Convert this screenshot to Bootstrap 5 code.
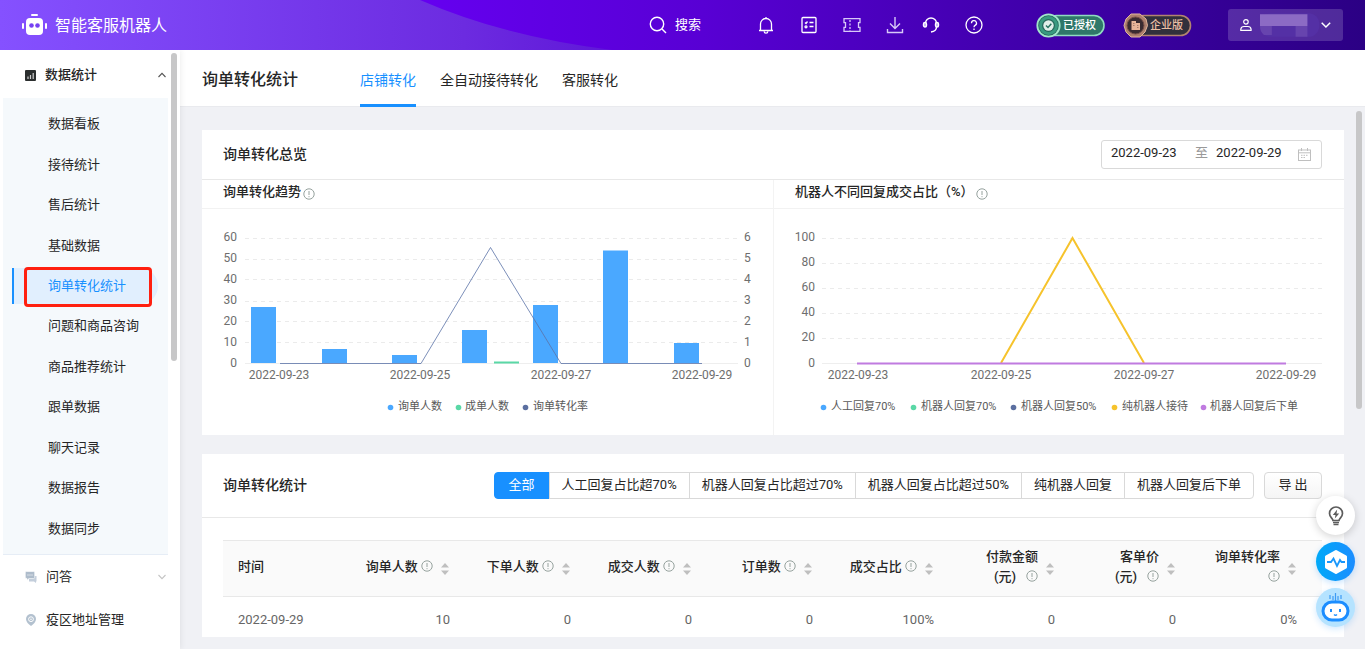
<!DOCTYPE html>
<html lang="zh-CN">
<head>
<meta charset="utf-8">
<meta name="viewport" content="width=device-width, initial-scale=1">
<title>智能客服机器人</title>
<link href="https://cdn.jsdelivr.net/npm/bootstrap@5.3.0/dist/css/bootstrap.min.css" rel="stylesheet">
<style>
:root{--ink:#262626;--brand:#1890ff;--rule:#e8e8e8}
body{font:13px/20px Roboto,"Noto Sans CJK SC",sans-serif;color:var(--ink);background:#f0f1f5}
button,input{font:inherit;color:inherit}
a{color:inherit;text-decoration:none}
.plain{border:0;background:none;padding:0}
.topbar{height:50px;background:linear-gradient(90deg,#8551ff,#6c2be0 34%,#5f17d8 45%);color:#fff;padding:0 22px 0 21px}
.topbar-curve{position:absolute;inset:0;width:100%;height:100%}
.brand-name{font-size:16px;padding-top:2px}
.search-btn{margin-right:56px}
.tool-row{gap:25px}
.tool-pair{gap:18px}
.pills{gap:18px;margin:0 36px 0 53px}
.pill{position:relative;width:69px;height:25px}
.pill svg{position:absolute;inset:0}
.pill span{position:absolute;left:27px;top:3px;font-size:11px;line-height:19px;font-weight:500}
.pill-bronze{color:#ecbfa4}
.account{width:115px;height:32px;border-radius:3px;background:rgba(255,255,255,.17);padding:0 12px}
.side{width:180px;background:#fff;box-shadow:1px 0 6px rgba(0,0,0,.07);z-index:1;padding-top:2px}
.side-head{height:46px;padding:0 14px 0 25px;gap:9px}
.side-group{font-weight:500}
.submenu{margin:0 12px 0 3px;padding:6px 0 5px;background:#f5f9fc;border-bottom:1px solid #e6edf6}
.submenu ul{height:445px}
.submenu a{height:36px;margin:0 10px 0 9px;padding-left:36px;display:flex;align-items:center}
.submenu a.current{background:#e1effe;color:var(--brand);border-left:2px solid var(--brand);padding-left:34px;border-radius:0 18px 18px 0;position:relative}
.outline-box{position:absolute;left:10px;right:6px;top:-1px;bottom:-3px;border:3px solid #ff2010;border-radius:4px}
.side-foot{height:43px}
.thumb{position:absolute;width:6px;border-radius:3px;background:#c7c7c8}
.side .thumb{top:3px;right:3px;height:308px}
.page-scroll>.thumb{top:4px;right:3px;height:298px}
.page-head{height:57px;background:#fff;border-bottom:1px solid #e9eaee;padding-left:22px;gap:62px}
.page-head h1{font-size:16px;line-height:24px;font-weight:500;margin:4px 0 0}
.page-tabs{gap:24px;font-size:14px;padding-top:2px}
.page-tabs a{height:56px;padding-top:4px;display:flex;align-items:center;border-bottom:3px solid transparent}
.page-tabs a.active{color:var(--brand);border-color:var(--brand)}
.page-body{padding:23px 21px 12px 22px;gap:19px}
.panel{background:#fff}
.panel-head{padding:0 22px 0 21px;border-bottom:1px solid var(--rule)}
.panel-head h2{font-size:14px;line-height:22px;font-weight:500;margin:0 0 2px}
.short-head{height:50px}.tall-head{height:64px}
.range{width:221px;height:29px;border:1px solid #d9d9d9;border-radius:3px;padding:0 10px 3px 9px;margin-top:-1px}
.range input{border:0;padding:0;width:76px;background:none;outline:0}
.range label{color:#999}
.chart-half+.chart-half{border-left:1px solid #f3f3f3}
.chart-head{height:29px;padding:0 21px 4px;border-bottom:1px solid #f2f2f2;gap:2px}
.chart-head h3{font-size:13px;line-height:20px;font-weight:500;margin:0}
.chart{display:block;width:100%;height:auto}
.chart text{font-size:12px;fill:#6e6e6e}
.chart .legend-text text{font-size:11px;fill:#595959}
.filters{gap:10px}
.filters .btn{font-size:13px;line-height:19px;padding:2px 12px 4px;border:1px solid #d9d9d9;border-radius:4px;color:var(--ink);background:#fff}
.filters .btn-group .btn:first-child{background:var(--brand);border-color:var(--brand);color:#fff;padding-left:14px;padding-right:14px}
.filters .export{background:linear-gradient(#fff,#f5f5f5);width:58px}
.data-wrap{padding:22px 22px 0 21px}
.data{table-layout:fixed;width:100%}
.data th{height:56px;background:#fafafa;border-top:1px solid var(--rule);border-bottom:1px solid var(--rule);font-weight:500;padding:0 16px 4px 15px;vertical-align:middle}
.data td{height:40px;padding:6px 15px 0;text-align:right;color:#666}
.data .day{text-align:left}
.data th:last-child,.data td:last-child{width:131px;padding-right:25px}
.data th:last-child{padding-right:26px}
.sorting{gap:8px;margin-left:-12px}
.sort{width:8px;height:12px;margin-top:4px}
.info{width:12px;height:12px;vertical-align:-1px;fill:none;stroke:#96a29e}
.floaters{position:fixed;right:10px;bottom:22px;gap:7px}
.floaters button{width:39px;height:39px;border-radius:50%}
.tip-btn{background:#fff;box-shadow:0 2px 8px rgba(0,0,0,.18)}
.pulse-btn{background:linear-gradient(90deg,#00a9f8,#1b8dff);box-shadow:0 2px 6px rgba(24,144,255,.25)}
.bot-btn{background:#b5e3ff;box-shadow:0 2px 6px rgba(24,144,255,.2)}
</style>
</head>
<body class="vh-100 d-flex flex-column overflow-hidden">
<svg width="0" height="0" class="position-absolute" aria-hidden="true">
  <symbol id="info" viewBox="0 0 12 12"><circle cx="6" cy="6" r="5.2"/><path d="M6 3v4M6 8.2v1"/></symbol>
  <symbol id="sort" viewBox="0 0 8 12"><path fill="#bfbfbf" d="M4 0l4 4.500H0zM4 12l4-4.500H0z"/></symbol>
</svg>

<header class="topbar position-relative d-flex align-items-center flex-shrink-0">
  <svg class="topbar-curve" viewBox="0 0 1365 50" preserveAspectRatio="none" aria-hidden="true">
    <defs><linearGradient id="deep"><stop offset="0" stop-color="#6500f0"/><stop offset=".3" stop-color="#5800d4"/><stop offset=".6" stop-color="#4300b0"/><stop offset="1" stop-color="#2b0084"/></linearGradient></defs>
    <path fill="url(#deep)" d="M420 0Q505 37 612 50H1365V0Z"/>
  </svg>
  <a href="#" class="position-relative d-flex align-items-center gap-2">
    <svg width="26" height="22" viewBox="0 0 26 22" fill="#fff"><rect x="10" y="0" width="7" height="2" rx="1"/><rect x="5" y="4" width="17" height="17" rx="4"/><rect x="1" y="9" width="2" height="6" rx="1"/><rect x="24" y="9" width="2" height="6" rx="1"/><circle cx="10.500" cy="11.500" r="2.300" fill="#7641f2"/><circle cx="16.500" cy="11.500" r="2.300" fill="#7641f2"/></svg>
    <span class="brand-name">智能客服机器人</span>
  </a>
  <div class="position-relative d-flex align-items-center ms-auto">
    <button class="plain search-btn d-flex align-items-center gap-2">
      <svg width="18" height="18" viewBox="0 0 18 18" fill="none" stroke="#fff" stroke-width="1.400"><circle cx="8" cy="8" r="6.700"/><path d="M13 13l4 4"/></svg>搜索</button>
    <div class="tool-row d-flex">
      <button class="plain d-flex" aria-label="通知"><svg width="18" height="18" viewBox="0 0 18 18" fill="none" stroke="#fff" stroke-width="1.300"><path d="M2 14.500h14M3.500 14.500V8a5.500 5.500 0 0 1 11 0v6.500M9 1v1.500M7.200 15.500a1.800 1.600 0 0 0 3.600 0"/></svg></button>
      <button class="plain d-flex" aria-label="任务"><svg width="18" height="18" viewBox="0 0 18 18" fill="none" stroke="#fff" stroke-width="1.300"><rect x="2" y="1.500" width="14" height="15" rx="1"/><path d="M5 6.500l1 1 1.500-2M9.500 6.500h4M9.500 10.500h4"/><circle cx="6" cy="10.800" r="1"/></svg></button>
      <button class="plain d-flex" aria-label="卡券"><svg width="18" height="18" viewBox="0 0 18 18" fill="none" stroke="#d8c8f8" stroke-width="1.300"><path d="M1 2.700h16v4h-1.500v4.600H17v4H1v-4h1.500V6.700H1z"/><path d="M7 4v11" stroke-dasharray="2 1.500"/></svg></button>
      <div class="tool-pair d-flex">
        <button class="plain d-flex" aria-label="下载"><svg width="18" height="18" viewBox="0 0 18 18" fill="none" stroke="#d8c8f8" stroke-width="1.400"><path d="M9 1v11M4 7.500l5 5 5-5M1.500 13v3.500h15V13"/></svg></button>
        <button class="plain d-flex" aria-label="客服"><svg width="18" height="18" viewBox="0 0 18 18" fill="none" stroke="#fff" stroke-width="1.400"><path d="M3.500 7.500a5.500 5.500 0 0 1 11 0M14.500 11c0 3-2 4.500-5.500 5"/><rect x="1.500" y="6.500" width="3" height="4.500" rx="1.500" fill="#bda4f4"/><rect x="13.500" y="6.500" width="3" height="4.500" rx="1.500" fill="#bda4f4"/></svg></button>
      </div>
      <button class="plain d-flex" aria-label="帮助"><svg width="18" height="18" viewBox="0 0 18 18" fill="none" stroke="#fff" stroke-width="1.300"><circle cx="9" cy="9" r="8"/><path d="M6.500 7.200a2.500 2.500 0 1 1 3.600 2.200Q9 10 9 11.200M9 12.500v1.400"/></svg></button>
    </div>
    <div class="pills d-flex">
      <div class="pill">
        <svg width="69" height="25" viewBox="0 0 69 25"><rect x="10.500" y="2.500" width="57.500" height="20" rx="10" fill="#2f7769" stroke="#8fdcc0" stroke-width="1.600"/><circle cx="12.500" cy="12.500" r="11.200" fill="#27685b" stroke="#a1e6cb" stroke-width="1.800"/><circle cx="12.500" cy="12.500" r="8" fill="none" stroke="#399a80" stroke-width="3"/><circle cx="12.500" cy="12.500" r="5.200" fill="#e0efe9"/><path d="M10 12.500l2 2 3.300-3.800" fill="none" stroke="#287361" stroke-width="1.500"/></svg><span>已授权</span>
      </div>
      <div class="pill pill-bronze">
        <svg width="69" height="25" viewBox="0 0 69 25"><rect x="10.500" y="2.500" width="57" height="20" rx="10" fill="#31303c" stroke="#b28470" stroke-width="1.600"/><path d="M8 1h9l6 5 1.500 6.500L22 19l-5 5H8l-5-5-2-6.500L3 6z" fill="#ad806e" stroke="#e2b59d"/><circle cx="12.500" cy="12.500" r="8.500" fill="#3a2b31" stroke="#754e48"/><path d="M8.500 8h4.500v2h4v7H8.500z" fill="#e7b49a"/><path d="M10 10.500h1.500M10 12.500h1.500M14 12.500h1.500M14 14.500h1.500" stroke="#a87c6c"/></svg><span>企业版</span>
      </div>
    </div>
    <button class="plain account d-flex align-items-center" aria-label="账户">
      <svg width="12" height="14" viewBox="0 0 12 14" fill="none" stroke="#fff" stroke-width="1.200"><circle cx="6" cy="3.800" r="2.300"/><path d="M.8 12.500v-1.300q.4-2.700 3.200-2.700h4q2.800 0 3.200 2.700v1.300z"/></svg>
      <svg width="62" height="28" viewBox="0 0 62 28" class="ms-2" aria-hidden="true"><rect y="2" width="60" height="24" rx="11" fill="#5430a5"/><path fill="#8c6bc4" d="M0 3h48v12H0z"/><path fill="#6744ae" d="M0 15h12v9H4q-4-3-4-9M36 15h12v11H36z"/></svg>
      <svg width="10" height="6" viewBox="0 0 10 6" fill="none" stroke="#fff" stroke-width="1.500"><path d="M.7.7L5 5 9.300.7"/></svg>
    </button>
  </div>
</header>

<div class="d-flex flex-fill overflow-hidden">
  <nav class="side position-relative flex-shrink-0" aria-label="主导航">
    <a href="#" class="side-head side-group d-flex align-items-center">
      <svg width="11" height="11" viewBox="0 0 11 11"><rect width="11" height="11" rx="1" fill="#2b2e2e"/><path d="M3 6.500V9M5.500 5V9M8.200 3V9" stroke="#cfcfcf" stroke-width="1.200"/></svg>
      数据统计
      <svg class="ms-auto" width="8" height="6" viewBox="0 0 8 6" fill="none" stroke="#555" stroke-width="1.100"><path d="M.5 5L4 1.300 7.500 5"/></svg>
    </a>
    <div class="submenu">
      <ul class="list-unstyled m-0 d-flex flex-column justify-content-around">
        <li><a href="#">数据看板</a></li>
        <li><a href="#">接待统计</a></li>
        <li><a href="#">售后统计</a></li>
        <li><a href="#">基础数据</a></li>
        <li><a href="#" class="current" aria-current="page">询单转化统计<i class="outline-box"></i></a></li>
        <li><a href="#">问题和商品咨询</a></li>
        <li><a href="#">商品推荐统计</a></li>
        <li><a href="#">跟单数据</a></li>
        <li><a href="#">聊天记录</a></li>
        <li><a href="#">数据报告</a></li>
        <li><a href="#">数据同步</a></li>
      </ul>
    </div>
    <a href="#" class="side-head side-foot d-flex align-items-center">
      <svg width="12" height="12" viewBox="0 0 12 12"><path fill="#c3cedb" d="M4 5h7.500v5.500H11V12l-2-1.500H4z"/><path fill="#aebccb" stroke="#fff" stroke-width=".6" d="M1.500.5h7q1.200 0 1.200 1.200v4.600q0 1.200-1.200 1.200H4l-2 1.700V7.500Q.3 7.500.3 6.300V1.700Q.3.500 1.500.5"/><path d="M2.500 4h5" stroke="#fff" stroke-dasharray="1 1"/></svg>
      问答
      <svg class="ms-auto" width="8" height="6" viewBox="0 0 8 6" fill="none" stroke="#c4c4c4" stroke-width="1.100"><path d="M.5 1L4 4.700 7.500 1"/></svg>
    </a>
    <a href="#" class="side-head side-foot d-flex align-items-center">
      <svg width="12" height="12" viewBox="0 0 12 12"><path fill="#b3c1cf" d="M6 0a5 5 0 0 1 5 5c0 3-2.500 5-5 7C3.500 10 1 8 1 5a5 5 0 0 1 5-5"/><circle cx="6" cy="5.200" r="2.400" fill="none" stroke="#fff"/><circle cx="6" cy="5.200" r=".8" fill="#fff"/></svg>
      疫区地址管理
    </a>
    <i class="thumb"></i>
  </nav>

  <main class="flex-fill d-flex flex-column overflow-hidden">
    <div class="page-head d-flex align-items-center flex-shrink-0">
      <h1>询单转化统计</h1>
      <nav class="page-tabs d-flex" aria-label="转化类型">
        <a href="#" class="active">店铺转化</a><a href="#">全自动接待转化</a><a href="#">客服转化</a>
      </nav>
    </div>
    <div class="page-scroll position-relative flex-fill overflow-hidden">
      <div class="page-body d-flex flex-column">
        <section class="panel">
          <div class="panel-head short-head d-flex align-items-center justify-content-between">
            <h2>询单转化总览</h2>
            <div class="range d-flex align-items-center">
              <input id="from" type="text" value="2022-09-23" aria-label="开始日期">
              <label for="to" class="mx-2">至</label>
              <input id="to" type="text" value="2022-09-29">
              <svg class="ms-auto mt-1" width="13" height="13" viewBox="0 0 13 13" fill="none" stroke="#bfbfbf"><rect x=".5" y="2" width="12" height="10.500"/><path d="M.5 4.800h12M3.500 0v3M9.500 0v3"/><path d="M3 7.300h7M3 9.500h4" stroke-dasharray="1.500 1"/></svg>
            </div>
          </div>
          <div class="row g-0">
            <div class="col-6 chart-half">
              <div class="chart-head d-flex align-items-center"><h3>询单转化趋势</h3><svg class="info mt-1"><use href="#info"/></svg></div>
              <svg class="chart" viewBox="0 0 571 226" role="img" aria-label="询单转化趋势">
                <g stroke="#ebebeb" stroke-dasharray="4 4"><path d="M43 29.500H536M43 50.500H536M43 70.500H536M43 92.500H536M43 112.500H536M43 133.500H536"/></g><path d="M43 154.500H536" stroke="#eee"/>
                <g text-anchor="end"><text x="35" y="32">60</text><text x="35" y="53">50</text><text x="35" y="74">40</text><text x="35" y="95">30</text><text x="35" y="116">20</text><text x="35" y="137">10</text><text x="35" y="158">0</text></g>
                <g><text x="542" y="32">6</text><text x="542" y="53">5</text><text x="542" y="74">4</text><text x="542" y="95">3</text><text x="542" y="116">2</text><text x="542" y="137">1</text><text x="542" y="158">0</text></g>
                <g fill="#4aa8ff"><path d="M49 98h25v56H49zM120 140h25v14h-25zM190 146h25v8h-25zM260 121h25v33h-25zM331 96h25v58h-25zM401 41.500h25V154h-25zM472 134h25v20h-25z"/></g><path fill="#5ad8a6" d="M292 152.500h25v2h-25z"/>
                <path d="M78 154.500H219L288.500 38.500L359 154.500H500" fill="none" stroke="#5b73a8" stroke-opacity=".8"/>
                <g text-anchor="middle"><text x="77" y="170">2022-09-23</text><text x="218" y="170">2022-09-25</text><text x="359" y="170">2022-09-27</text><text x="500" y="170">2022-09-29</text></g>
                <g><circle cx="188.500" cy="198.500" r="2.800" fill="#4aa8ff"/><circle cx="256.500" cy="198.500" r="2.800" fill="#5ad8a6"/><circle cx="323.500" cy="198.500" r="2.800" fill="#5b6fa0"/></g>
                <g class="legend-text"><text x="196" y="201">询单人数</text><text x="263" y="201">成单人数</text><text x="331" y="201">询单转化率</text></g>
              </svg>
            </div>
            <div class="col-6 chart-half">
              <div class="chart-head d-flex align-items-center"><h3>机器人不同回复成交占比（%）</h3><svg class="info mt-1"><use href="#info"/></svg></div>
              <svg class="chart" viewBox="0 0 570 226" role="img" aria-label="机器人不同回复成交占比">
                <path stroke="#ebebeb" stroke-dasharray="4 4" d="M48 29.500H548M48 54.500H548M48 79.500H548M48 104.500H548M48 129.500H548"/><path d="M48 154.500H548" stroke="#eee"/>
                <g text-anchor="end"><text x="41" y="32">100</text><text x="41" y="57">80</text><text x="41" y="82">60</text><text x="41" y="107">40</text><text x="41" y="132">20</text><text x="41" y="158">0</text></g>
                <path d="M227 154L298.500 29L370 154" fill="none" stroke="#f6c32c" stroke-width="2"/><path d="M83 154.500H512" stroke="#c07be0" stroke-width="2"/>
                <g text-anchor="middle"><text x="84" y="170">2022-09-23</text><text x="227" y="170">2022-09-25</text><text x="370" y="170">2022-09-27</text><text x="512" y="170">2022-09-29</text></g>
                <g><circle cx="49.500" cy="198.500" r="2.800" fill="#4aa8ff"/><circle cx="139.500" cy="198.500" r="2.800" fill="#5ad8a6"/><circle cx="239.500" cy="198.500" r="2.800" fill="#5b6fa0"/><circle cx="340.500" cy="198.500" r="2.800" fill="#f6c32c"/><circle cx="429.500" cy="198.500" r="2.800" fill="#c07be0"/></g>
                <g class="legend-text"><text x="57" y="201">人工回复70%</text><text x="147" y="201">机器人回复70%</text><text x="247" y="201">机器人回复50%</text><text x="348" y="201">纯机器人接待</text><text x="436" y="201">机器人回复后下单</text></g>
              </svg>
            </div>
          </div>
        </section>

        <section class="panel">
          <div class="panel-head tall-head d-flex align-items-center justify-content-between">
            <h2>询单转化统计</h2>
            <div class="filters d-flex">
              <div class="btn-group" role="group" aria-label="回复类型">
                <button class="btn">全部</button><button class="btn">人工回复占比超70%</button><button class="btn">机器人回复占比超过70%</button><button class="btn">机器人回复占比超过50%</button><button class="btn">纯机器人回复</button><button class="btn">机器人回复后下单</button>
              </div>
              <button class="btn export">导 出</button>
            </div>
          </div>
          <div class="data-wrap">
            <table class="data">
              <thead><tr>
                <th class="day">时间</th>
                <th><div class="sorting d-flex align-items-center justify-content-end"><span>询单人数 <svg class="info"><use href="#info"/></svg></span><svg class="sort"><use href="#sort"/></svg></div></th>
                <th><div class="sorting d-flex align-items-center justify-content-end"><span>下单人数 <svg class="info"><use href="#info"/></svg></span><svg class="sort"><use href="#sort"/></svg></div></th>
                <th><div class="sorting d-flex align-items-center justify-content-end"><span>成交人数 <svg class="info"><use href="#info"/></svg></span><svg class="sort"><use href="#sort"/></svg></div></th>
                <th><div class="sorting d-flex align-items-center justify-content-end"><span>订单数 <svg class="info"><use href="#info"/></svg></span><svg class="sort"><use href="#sort"/></svg></div></th>
                <th><div class="sorting d-flex align-items-center justify-content-end"><span>成交占比 <svg class="info"><use href="#info"/></svg></span><svg class="sort"><use href="#sort"/></svg></div></th>
                <th><div class="sorting d-flex align-items-center justify-content-end"><span class="text-end">付款金额<br>(元)&ensp;&nbsp;<svg class="info"><use href="#info"/></svg></span><svg class="sort"><use href="#sort"/></svg></div></th>
                <th><div class="sorting d-flex align-items-center justify-content-end"><span class="text-end">客单价<br>(元)&ensp;&nbsp;<svg class="info"><use href="#info"/></svg></span><svg class="sort"><use href="#sort"/></svg></div></th>
                <th><div class="sorting d-flex align-items-center justify-content-end"><span class="text-end">询单转化率<br><svg class="info"><use href="#info"/></svg></span><svg class="sort"><use href="#sort"/></svg></div></th>
              </tr></thead>
              <tbody><tr><td class="day">2022-09-29</td><td>10</td><td>0</td><td>0</td><td>0</td><td>100%</td><td>0</td><td>0</td><td>0%</td></tr></tbody>
            </table>
          </div>
        </section>
      </div>
      <i class="thumb"></i>
    </div>
  </main>
</div>

<div class="floaters d-flex flex-column">
  <button class="plain tip-btn" aria-label="提示"><svg width="16" height="20" viewBox="0 0 16 20" fill="none" stroke="#5c5c5c" stroke-width="1.700"><path d="M5 14.500c0-2-3.500-3.300-3.500-7a6.500 6.500 0 0 1 13 0c0 3.700-3.500 5-3.500 7z"/><path d="M5 16.500h6M5.500 18.500h5"/><path fill="#5c5c5c" stroke="none" d="M9.200 3.500L4.800 9h2.700l-.7 3.500L11.200 7.500H8.500z"/></svg></button>
  <button class="plain pulse-btn" aria-label="监控"><svg width="26" height="26" viewBox="0 0 26 26"><path fill="#fff" stroke="#fff" stroke-width="3" stroke-linejoin="round" d="M13 2.500l9.500 5.200v10.600L13 23.500l-9.500-5.200V7.700z"/><path d="M4 13h4l2.500-3.500 3.500 7.500 3-6 1.500 2H22" fill="none" stroke="#1997fb" stroke-width="1.800"/></svg></button>
  <button class="plain bot-btn" aria-label="机器人"><svg width="29" height="29" viewBox="0 0 29 29" fill="none"><path d="M9 2v4M12 3v4M14.500 0v8M17 3v4M20 2v4" stroke="#3d9cf5" stroke-width="1.200"/><rect x="2" y="9" width="25" height="18" rx="9" fill="#fff" stroke="#1b8dff" stroke-width="3"/><path d="M10 16v3M19 16v3" stroke="#1b8dff" stroke-width="2"/><path d="M13 21.500q1.500 1.500 3 0" stroke="#1b8dff" stroke-width="1.300"/></svg></button>
</div>
<script src="https://cdn.jsdelivr.net/npm/bootstrap@5.3.0/dist/js/bootstrap.bundle.min.js"></script>
</body>
</html>
